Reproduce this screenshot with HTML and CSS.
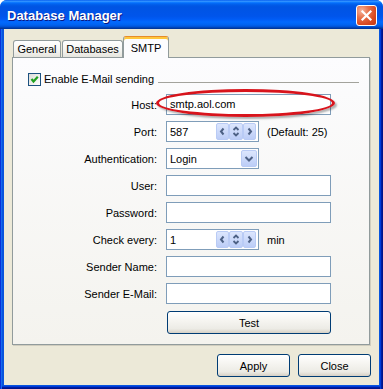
FILE: index.html
```html
<!DOCTYPE html>
<html>
<head>
<meta charset="utf-8">
<link rel="stylesheet" href="styles.css">
</head>
<body>
<div class="window">
  <div class="titlebar">
    <span class="title">Database Manager</span>
    <div class="close-btn">
      <svg width="19" height="19" viewBox="0 0 19 19"><path d="M5.5 5.5 L13.5 13.5 M13.5 5.5 L5.5 13.5" stroke="#fff" stroke-width="2.2" stroke-linecap="square"/></svg>
    </div>
  </div>
  <div class="frame">
    <div class="client">
      <div class="tabs">
        <div class="tab tab-general">General</div>
        <div class="tab tab-databases">Databases</div>
        <div class="tab active">SMTP</div>
      </div>
      <div class="panel">
        <div class="group-head">
          <span class="checkbox"><svg width="11" height="11" viewBox="0 0 11 11"><path d="M2.5 5 L4.5 7.5 L8.8 2.8" fill="none" stroke="#21A121" stroke-width="2.2"/></svg></span>
          <span class="group-label">Enable E-Mail sending</span>
          <span class="group-line"></span>
        </div>
        <div class="form">
          <span class="lbl">Host:</span>
          <div class="input">smtp.aol.com</div>

          <span class="lbl">Port:</span>
          <div class="inline">
            <div class="spin">
              <span class="spin-value">587</span>
              <span class="spin-btn w13"><svg width="11" height="15" viewBox="0 0 11 15"><path d="M6.5 4.5 L4 7.5 L6.5 10.5" fill="none" stroke="#4D6185" stroke-width="2"/></svg></span>
              <span class="spin-btn w14"><svg width="12" height="15" viewBox="0 0 12 15"><path d="M3.5 6 L6 3.5 L8.5 6 M3.5 9 L6 11.5 L8.5 9" fill="none" stroke="#4D6185" stroke-width="1.8"/></svg></span>
              <span class="spin-btn w13"><svg width="11" height="15" viewBox="0 0 11 15"><path d="M4.5 4.5 L7 7.5 L4.5 10.5" fill="none" stroke="#4D6185" stroke-width="2"/></svg></span>
            </div>
            <span>(Default: 25)</span>
          </div>

          <span class="lbl">Authentication:</span>
          <div class="combo">
            <span class="combo-value">Login</span>
            <span class="combo-btn"><svg width="14" height="15" viewBox="0 0 14 15"><path d="M3.5 6 L7 9.5 L10.5 6" fill="none" stroke="#4D6185" stroke-width="2"/></svg></span>
          </div>

          <span class="lbl">User:</span>
          <div class="input"></div>

          <span class="lbl">Password:</span>
          <div class="input"></div>

          <span class="lbl">Check every:</span>
          <div class="inline">
            <div class="spin">
              <span class="spin-value">1</span>
              <span class="spin-btn w13"><svg width="11" height="15" viewBox="0 0 11 15"><path d="M6.5 4.5 L4 7.5 L6.5 10.5" fill="none" stroke="#4D6185" stroke-width="2"/></svg></span>
              <span class="spin-btn w14"><svg width="12" height="15" viewBox="0 0 12 15"><path d="M3.5 6 L6 3.5 L8.5 6 M3.5 9 L6 11.5 L8.5 9" fill="none" stroke="#4D6185" stroke-width="1.8"/></svg></span>
              <span class="spin-btn w13"><svg width="11" height="15" viewBox="0 0 11 15"><path d="M4.5 4.5 L7 7.5 L4.5 10.5" fill="none" stroke="#4D6185" stroke-width="2"/></svg></span>
            </div>
            <span>min</span>
          </div>

          <span class="lbl">Sender Name:</span>
          <div class="input"></div>

          <span class="lbl">Sender E-Mail:</span>
          <div class="input"></div>

          <span></span>
          <button class="btn test-btn">Test</button>
        </div>
      </div>
      <div class="actions">
        <button class="btn">Apply</button>
        <button class="btn">Close</button>
      </div>
    </div>
  </div>
  <div class="annotation"></div>
</div>
</body>
</html>
```
FILE: styles.css
```css
body {
  margin: 0;
  font-family: "Liberation Sans", Arial, sans-serif;
  font-size: 11px;
  color: #000;
}

.window {
  position: relative;
  width: 383px;
  height: 389px;
  border-radius: 7px 7px 0 0;
  overflow: hidden;
  background: #0855DD;
  display: flex;
  flex-direction: column;
}

.titlebar {
  height: 29px;
  flex: none;
  box-sizing: border-box;
  display: flex;
  align-items: center;
  justify-content: space-between;
  padding: 0 6px 0 7px;
  background: linear-gradient(to bottom, #0058ee 0%, #3593ff 4%, #288eff 6%, #127dff 8%, #036ffc 10%, #0262ee 14%, #0057e5 20%, #0054e3 24%, #0055eb 56%, #005bf5 66%, #026afe 76%, #0062ef 86%, #0052d6 92%, #0040ab 96%, #003092 100%);
}

.title {
  color: #fff;
  font-weight: bold;
  font-size: 13px;
  text-shadow: 1px 1px 0 #0A1883;
  margin-top: 1px;
}

.close-btn {
  width: 21px;
  height: 21px;
  box-sizing: border-box;
  border: 1px solid #fff;
  border-radius: 3px;
  margin-top: 2px;
  background: radial-gradient(circle at 25% 25%, #F6B49C 0%, #E7714A 35%, #D9481F 70%, #C13A16 100%);
  display: flex;
  align-items: center;
  justify-content: center;
}

.frame {
  flex: 1;
  display: flex;
  padding: 0 4px 4px;
  background: #0855DD;
  box-shadow: inset 1px 0 #0831D9, inset 2px 0 #166AEE, inset -1px 0 #00138C, inset -2px 0 #001EA0, inset -3px 0 #003BDA, inset 0 -1px #00138C, inset 0 -2px #001EA0, inset 0 -3px #003BDA;
}

.client {
  flex: 1;
  background: #ECE9D8;
  padding: 7px 8px 0 8px;
}

.tabs {
  display: flex;
  align-items: flex-end;
  height: 21px;
  padding-left: 1px;
}

.tab {
  height: 17px;
  box-sizing: border-box;
  border: 1px solid #919B9C;
  border-bottom: none;
  border-radius: 3px 3px 0 0;
  background: linear-gradient(#FFFFFF, #F4F4F0 60%, #E6E5DE);
  display: flex;
  align-items: center;
  justify-content: center;
}

.tab-general {
  width: 48px;
  margin-right: 1px;
}

.tab-databases {
  width: 61px;
}

.tab.active {
  width: 46px;
  height: 22px;
  margin-bottom: -1px;
  position: relative;
  z-index: 1;
  background: #FCFCFE;
  border-top: 1px solid #E68B2C;
  box-shadow: inset 0 2px #FFC73C;
  padding-top: 1px;
}

.panel {
  width: 358px;
  height: 288px;
  box-sizing: border-box;
  border: 1px solid #919B9C;
  background: linear-gradient(#FCFCFE, #F4F3EE);
  box-shadow: 1px 1px 0 #D0CDBE;
  padding: 15px 10px 0 15px;
}

.group-head {
  display: flex;
  height: 13px;
}

.checkbox {
  width: 13px;
  height: 13px;
  flex: none;
  box-sizing: border-box;
  border: 1px solid #1C5180;
  background: linear-gradient(135deg, #DCDCD7, #FFFFFF);
  display: flex;
  align-items: center;
  justify-content: center;
}

.group-label {
  margin-left: 3px;
  line-height: 13px;
  white-space: nowrap;
}

.group-line {
  flex: 1;
  height: 1px;
  background: #A3A39C;
  margin: 9px 0 0 4px;
}

.form {
  display: grid;
  grid-template-columns: 129px auto;
  grid-template-rows: repeat(8, 21px) 24px;
  column-gap: 9px;
  row-gap: 6px;
  margin-top: 8px;
  align-items: center;
}

.lbl {
  text-align: right;
  white-space: nowrap;
}

.input {
  width: 165px;
  height: 21px;
  box-sizing: border-box;
  border: 1px solid #7F9DB9;
  background: #fff;
  padding: 0 3px;
  line-height: 19px;
}

.inline {
  display: flex;
  align-items: center;
  gap: 8px;
}

.spin {
  width: 93px;
  height: 21px;
  box-sizing: border-box;
  border: 1px solid #7F9DB9;
  background: #fff;
  display: flex;
  align-items: center;
  padding-right: 2px;
}

.spin-value {
  flex: 1;
  padding-left: 3px;
}

.spin-btn {
  height: 17px;
  box-sizing: border-box;
  border: 1px solid #B9CBF5;
  border-radius: 2px;
  background: linear-gradient(#DCE6FD, #BCCDF7);
  display: flex;
  align-items: center;
  justify-content: center;
}

.w13 {
  width: 13px;
}

.w14 {
  width: 14px;
}

.combo {
  width: 93px;
  height: 21px;
  box-sizing: border-box;
  border: 1px solid #7F9DB9;
  background: #fff;
  display: flex;
  align-items: center;
  padding-right: 1px;
}

.combo-value {
  flex: 1;
  padding-left: 3px;
}

.combo-btn {
  width: 16px;
  height: 17px;
  box-sizing: border-box;
  border: 1px solid #B9CBF5;
  border-radius: 2px;
  background: linear-gradient(#DCE6FD, #BCCDF7);
  display: flex;
  align-items: center;
  justify-content: center;
}

.btn {
  width: 73px;
  height: 23px;
  box-sizing: border-box;
  border: 1px solid #003C74;
  border-radius: 3px;
  background: linear-gradient(180deg, #FFFFFF 0%, #F6F5F1 40%, #ECEBE5 80%, #D6D0C5 100%);
  font-family: "Liberation Sans", Arial, sans-serif;
  font-size: 11px;
  color: #000;
  padding: 0;
}

.test-btn {
  width: 164px;
  margin-left: 1px;
  align-self: end;
}

.actions {
  display: flex;
  justify-content: flex-end;
  gap: 8px;
  margin-top: 9px;
}

.annotation {
  position: absolute;
  left: 156px;
  top: 89px;
  width: 179px;
  height: 28px;
  box-sizing: border-box;
  border: 3px solid #D8141C;
  border-radius: 50%;
  box-shadow: 2px 2px 2px rgba(0, 0, 0, 0.3);
}
```
